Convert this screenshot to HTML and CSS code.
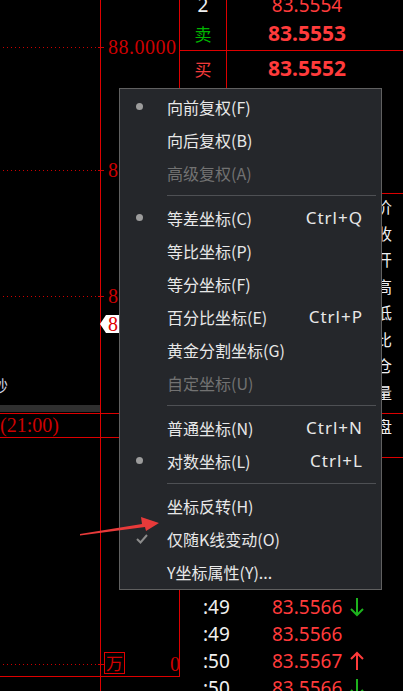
FILE: index.html
```html
<!DOCTYPE html>
<html lang="zh-CN">
<head>
    <meta charset="UTF-8">
    <meta name="viewport" content="width=device-width, initial-scale=1.0">
    <title>K线 - Y坐标菜单</title>
    <link rel="stylesheet" href="styles.css">
</head>
<body>
    <div class="screen">
        <!-- chart grid -->
        <div class="grid v" style="left:100px; top:0; height:691px;"></div>
        <div class="grid v" style="left:179px; top:0; height:677px;"></div>
        <div class="grid v" style="left:226px; top:0; height:193px;"></div>
        <div class="grid h" style="left:179px; top:50px; width:224px;"></div>
        <div class="grid h" style="left:179px; top:193px; width:224px;"></div>
        <div class="grid h" style="left:0; top:413px; width:403px;"></div>
        <div class="grid h" style="left:0; top:437px; width:179px;"></div>
        <div class="grid h" style="left:179px; top:457px; width:224px;"></div>
        <div class="grid h" style="left:0; top:676px; width:179px;"></div>

        <!-- price axis -->
        <div class="dots" style="top:47px;"></div>
        <div class="dots" style="top:170px;"></div>
        <div class="dots" style="top:296px;"></div>
        <div class="dots" style="top:664px;"></div>

        <div class="axis-label" style="top:37px;">88.0000</div>
        <div class="axis-label" style="top:160px;">8</div>
        <div class="axis-label" style="top:286px;">8</div>
        <div class="price-tag">8</div>
        <div class="axis-label" style="top:654px; left:170px;">0</div>
        <div class="unit">万</div>

        <div class="scrollbar"></div>
        <div class="side-text">秒</div>
        <div class="time-label">(21:00)</div>

        <!-- order book -->
        <div class="book">
            <div class="book-row">
                <span class="side white">2</span>
                <span class="quote">83.5554</span>
            </div>
            <div class="book-row">
                <span class="side green">卖</span>
                <span class="quote bold">83.5553</span>
            </div>
            <div class="book-row bid">
                <span class="side red">买</span>
                <span class="quote bold">83.5552</span>
            </div>
        </div>

        <div class="fields">
            <span>价</span><span>收</span><span>开</span><span>高</span>
            <span>低</span><span>比</span><span>仓</span><span>量</span>
            <span class="last">盘</span>
        </div>

        <div class="ticks">
            <div class="tick-row">
                <span class="tick-time">:49</span>
                <span class="tick-price">83.5566</span>
                <svg class="tick-arrow" width="14" height="20" viewBox="0 0 14 20"><path d="M7 1V18M1 12L7 18L13 12" stroke="#1db31d" stroke-width="2" fill="none"/></svg>
            </div>
            <div class="tick-row">
                <span class="tick-time">:49</span>
                <span class="tick-price">83.5566</span>
            </div>
            <div class="tick-row">
                <span class="tick-time">:50</span>
                <span class="tick-price">83.5567</span>
                <svg class="tick-arrow" width="14" height="20" viewBox="0 0 14 20"><path d="M7 19V2M1 8L7 2L13 8" stroke="#ff3b3b" stroke-width="2" fill="none"/></svg>
            </div>
            <div class="tick-row">
                <span class="tick-time">:50</span>
                <span class="tick-price">83.5566</span>
                <svg class="tick-arrow" width="14" height="20" viewBox="0 0 14 20"><path d="M7 1V18M1 12L7 18L13 12" stroke="#1db31d" stroke-width="2" fill="none"/></svg>
            </div>
        </div>

        <!-- context menu -->
        <div class="menu">
            <div class="item on">向前复权(F)</div>
            <div class="item">向后复权(B)</div>
            <div class="item off">高级复权(A)</div>
            <div class="sep"></div>
            <div class="item on">等差坐标(C)<span class="keys">Ctrl+Q</span></div>
            <div class="item">等比坐标(P)</div>
            <div class="item">等分坐标(F)</div>
            <div class="item">百分比坐标(E)<span class="keys">Ctrl+P</span></div>
            <div class="item">黄金分割坐标(G)</div>
            <div class="item off">自定坐标(U)</div>
            <div class="sep"></div>
            <div class="item">普通坐标(N)<span class="keys">Ctrl+N</span></div>
            <div class="item on">对数坐标(L)<span class="keys">Ctrl+L</span></div>
            <div class="sep"></div>
            <div class="item">坐标反转(H)</div>
            <div class="item checked">
                <svg class="check" width="12" height="10" viewBox="0 0 12 10"><path d="M1 5L4.5 8.5L11 1" stroke="#8c8c8c" stroke-width="2" fill="none"/></svg>
                仅随K线变动(O)
            </div>
            <div class="item">Y坐标属性(Y)...</div>
        </div>

        <!-- annotation arrow -->
        <svg class="pointer" width="90" height="24" viewBox="0 0 90 24">
            <polygon points="0,18 62,8 61,1 79,7 66,15 65,11 0,19.5" fill="#e83a3a"/>
        </svg>
    </div>
</body>
</html>
```
FILE: styles.css
```css
body {
    margin: 0;
    background: #000;
    font-family: "Noto Sans", "Noto Sans CJK SC", sans-serif;
}

.screen {
    position: relative;
    width: 403px;
    height: 691px;
    overflow: hidden;
    background: #000;
}

/* grid lines */
.grid {
    position: absolute;
    background: #dd0000;
}

.grid.v {
    width: 1px;
}

.grid.h {
    height: 1px;
}

.dots {
    position: absolute;
    left: 3px;
    width: 101px;
    height: 1px;
    background:
        linear-gradient(#cc0000, #cc0000) right / 6px 1px no-repeat,
        repeating-linear-gradient(to right, #cc0000 0 1px, transparent 1px 4px);
}

.axis-label {
    position: absolute;
    left: 108px;
    font-family: "Liberation Serif", "Noto Sans CJK SC", serif;
    font-size: 20px;
    line-height: 20px;
    color: #cc0000;
    letter-spacing: 0.5px;
}

.price-tag {
    position: absolute;
    left: 100px;
    top: 315px;
    width: 22px;
    height: 18px;
    padding-left: 8px;
    background: #fff;
    color: #e00000;
    font-family: "Liberation Serif", serif;
    font-size: 20px;
    line-height: 18px;
    clip-path: polygon(6px 0, 100% 0, 100% 100%, 6px 100%, 0 50%);
}

.unit {
    position: absolute;
    left: 104px;
    top: 652px;
    width: 19px;
    height: 20px;
    border: 1px solid #e00000;
    color: #d00000;
    font-family: "Noto Sans CJK SC", serif;
    font-size: 17px;
    line-height: 20px;
    text-align: center;
}

.scrollbar {
    position: absolute;
    left: 0;
    top: 405px;
    width: 100px;
    height: 7px;
    background: #2f2f2f;
}

.side-text {
    position: absolute;
    left: -8px;
    top: 374px;
    font-family: "Noto Sans CJK SC", sans-serif;
    font-size: 16px;
    line-height: 22px;
    color: #c9d2e4;
}

.time-label {
    position: absolute;
    left: 0;
    top: 415px;
    font-family: "Liberation Serif", serif;
    font-size: 20px;
    line-height: 20px;
    color: #cc0000;
}

/* order book */
.book {
    position: absolute;
    left: 180px;
    top: -9px;
    width: 223px;
}

.book-row {
    display: flex;
    align-items: center;
    height: 28px;
}

.book-row.bid {
    margin-top: 7px;
}

.side {
    width: 46px;
    text-align: center;
    font-family: "Noto Sans CJK SC", sans-serif;
    font-size: 17px;
}

.white {
    color: #f0f0f0;
    font-family: "Noto Sans", sans-serif;
    font-size: 19px;
}

.green {
    color: #00b400;
}

.red {
    color: #f03a3a;
}

.quote {
    width: 162px;
    text-align: center;
    color: #ff3b3b;
    font-size: 19px;
}

.quote.bold {
    font-size: 21px;
    font-weight: bold;
}

.fields {
    position: absolute;
    left: 376px;
    top: 193px;
    display: flex;
    flex-direction: column;
    font-family: "Noto Sans CJK SC", sans-serif;
    font-size: 16px;
    line-height: 26.5px;
    color: #eef0f4;
}

.fields .last {
    margin-top: 8px;
}

.ticks {
    position: absolute;
    left: 180px;
    top: 593px;
    width: 223px;
}

.tick-row {
    display: flex;
    align-items: center;
    height: 27px;
    padding-left: 23px;
    font-size: 19px;
}

.tick-time {
    width: 69px;
    color: #f0f0f0;
}

.tick-price {
    width: 78px;
    color: #ff3b3b;
}

/* context menu */
.menu {
    position: absolute;
    left: 119px;
    top: 88px;
    width: 263px;
    height: 502px;
    box-sizing: border-box;
    padding: 1px 0;
    background: #25272b;
    border: 1px solid #606060;
    font-family: "Noto Sans CJK SC", sans-serif;
}

.item {
    position: relative;
    display: flex;
    align-items: center;
    height: 33px;
    padding: 0 18px 0 47px;
    font-size: 16px;
    color: #e8e8e8;
}

.item.off {
    color: #727272;
}

.item.on::before {
    content: "";
    position: absolute;
    left: 16px;
    top: 13px;
    width: 7px;
    height: 7px;
    border-radius: 50%;
    background: #9c9c9c;
}

.check {
    position: absolute;
    left: 16px;
    top: 12px;
}

.keys {
    margin-left: auto;
    font-family: "Noto Sans", sans-serif;
    font-size: 17px;
    letter-spacing: 1px;
}

.sep {
    height: 1px;
    margin: 6px 5px 5px 47px;
    background: #4e5054;
}

.pointer {
    position: absolute;
    left: 80px;
    top: 516px;
}
```
